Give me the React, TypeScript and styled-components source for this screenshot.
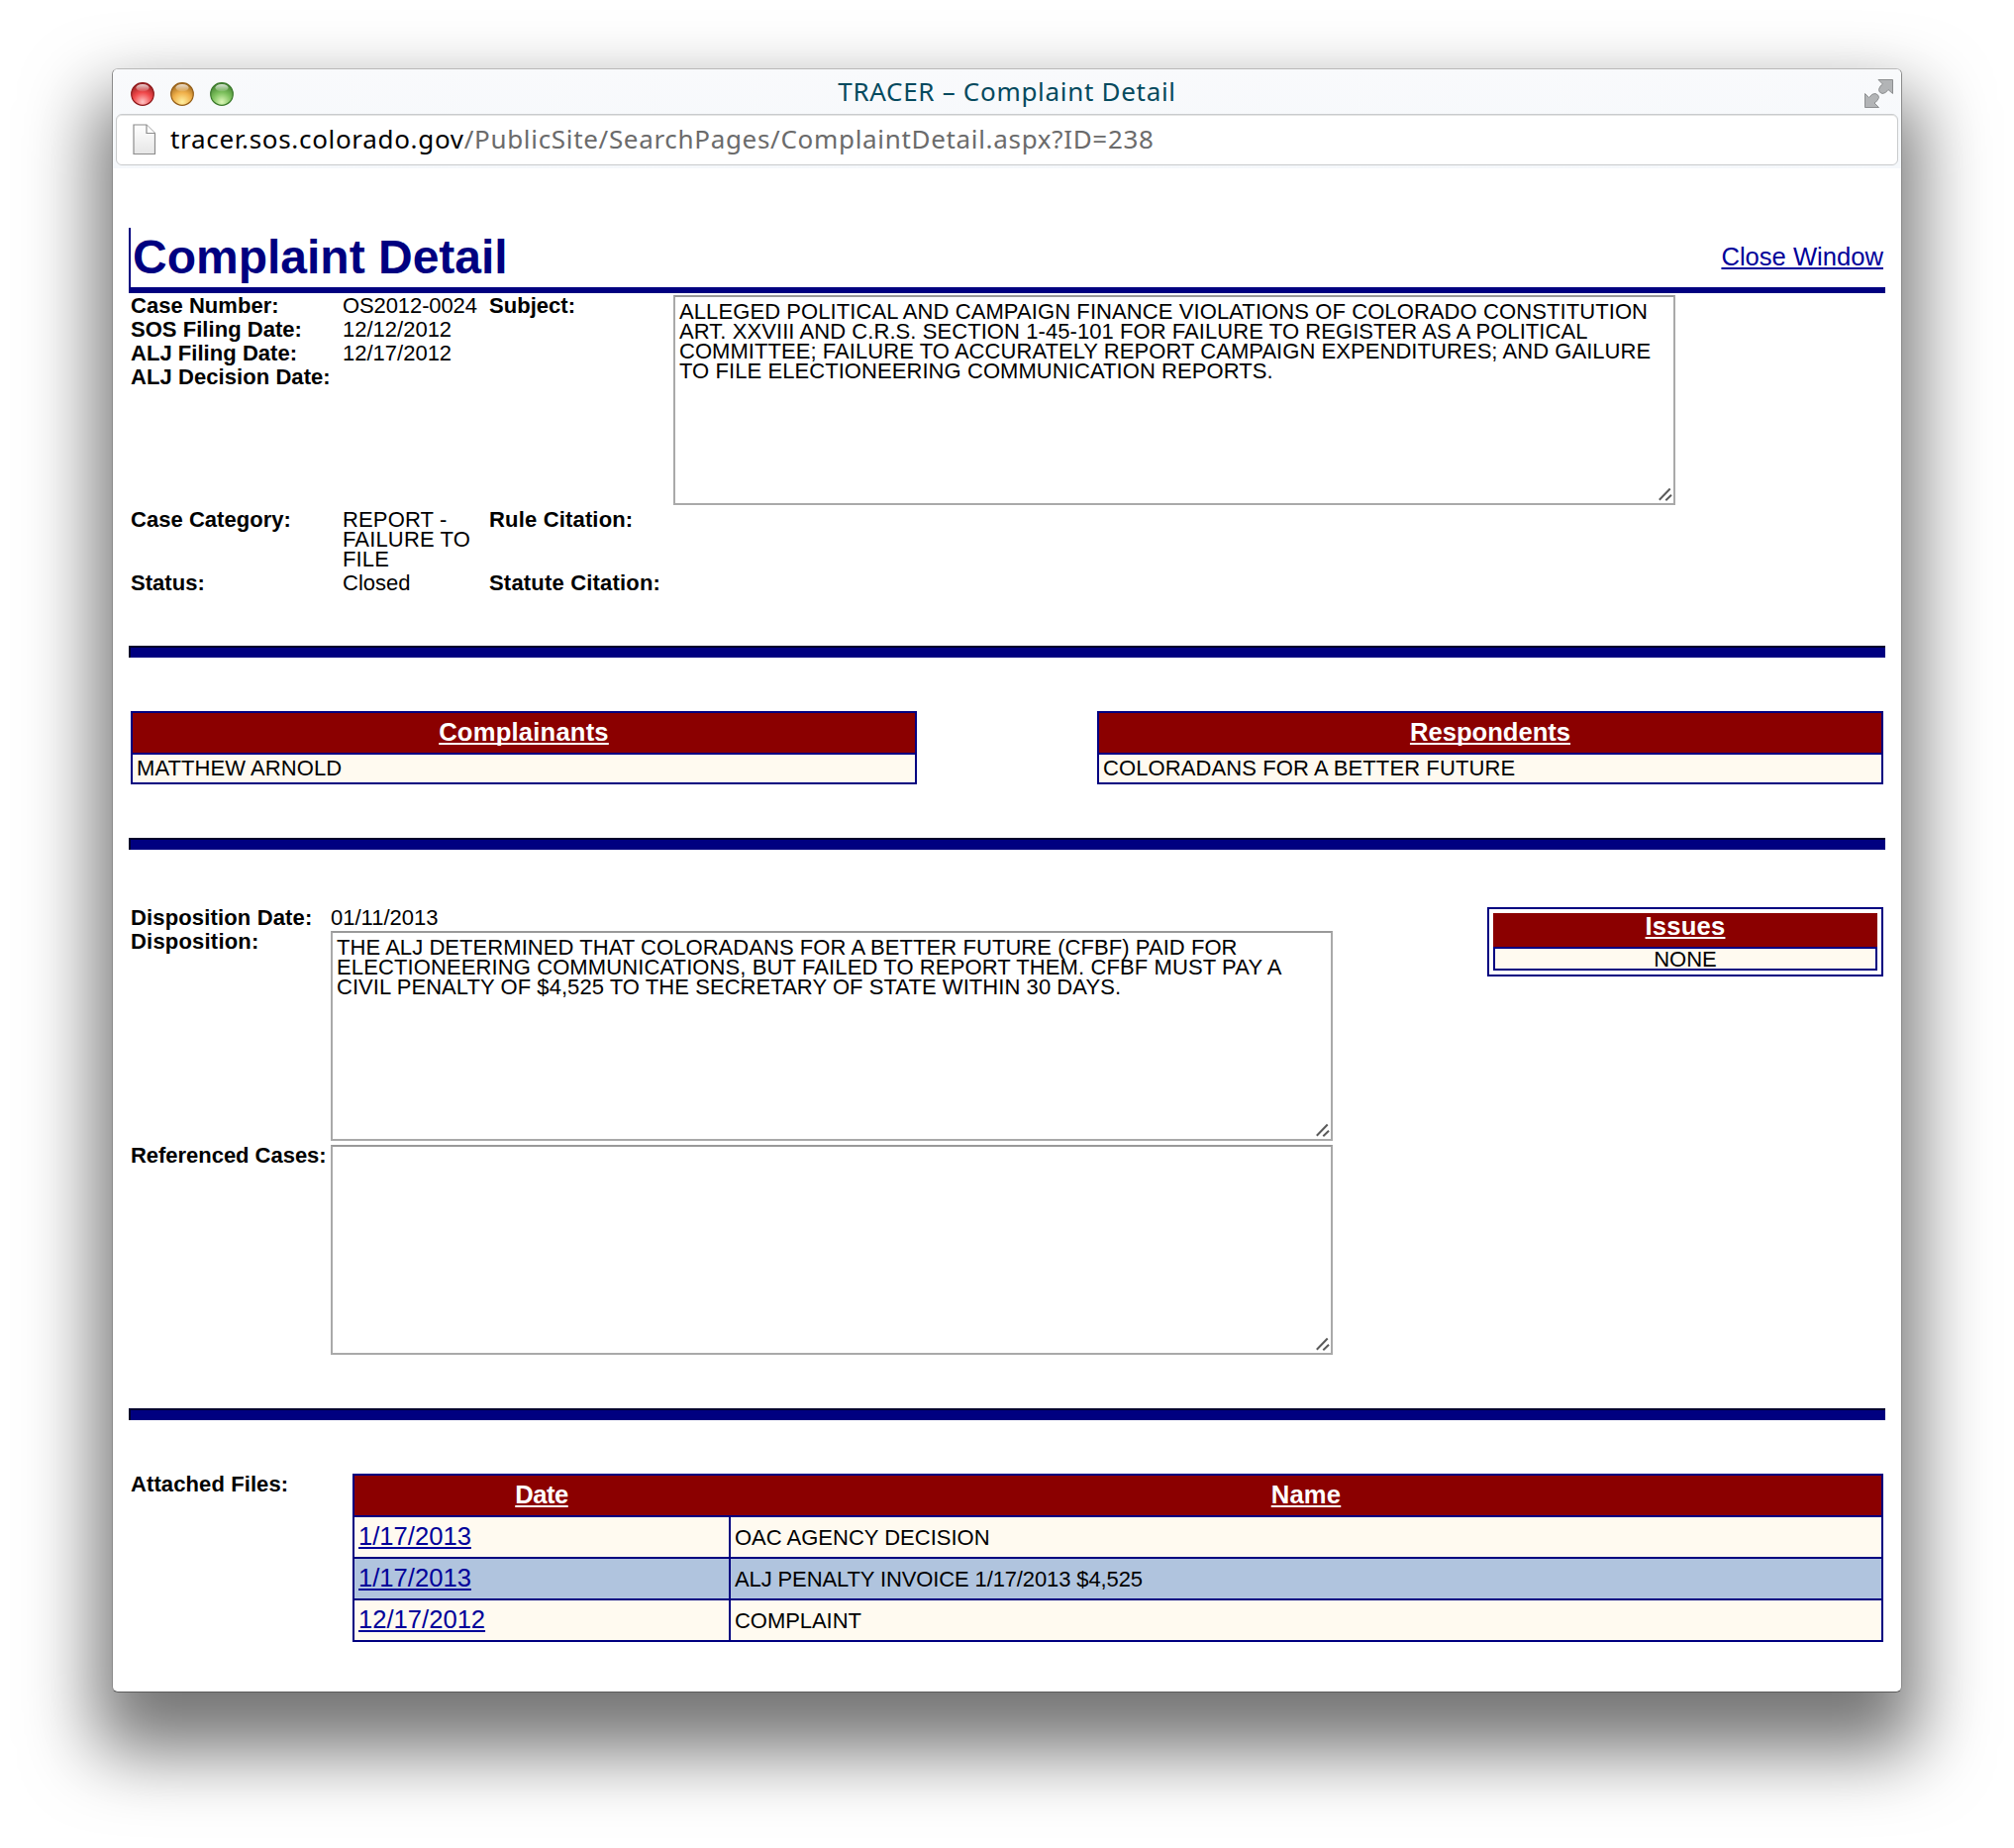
import React from "react";
import styled, { createGlobalStyle } from "styled-components";

const GlobalStyle = createGlobalStyle`
  * { box-sizing: border-box; }
  html, body { margin: 0; background: #fff; }
  body { overflow: hidden; font-family: "Liberation Sans", Arial, sans-serif; color: #000; }
`;

const Desktop = styled.div`
  width: 2034px;
  height: 1866px;
  padding: 69px 0 0 113px;
`;

const Window = styled.div`
  width: 1808px;
  height: 1640px;
  border: 1px solid;
  border-color: #b9b9b9 #8a8a8a #5c5c5c #8a8a8a;
  border-radius: 6px;
  background: #fff;
  overflow: hidden;
  box-shadow: 0 44px 72px 16px rgba(0, 0, 0, 0.54);
`;

const Chrome = styled.div`
  height: 100px;
  padding: 0 3px;
  background: linear-gradient(#f9fafc, #f5f8fb);
`;

const TitleBar = styled.div`
  height: 45px;
  display: grid;
  grid-template-columns: 200px 1fr 200px;
  align-items: center;
`;

const Lights = styled.div`
  display: flex;
  gap: 16px;
  padding: 3px 0 0 15px;
`;

const Title = styled.div`
  text-align: center;
  font: 26px/44px "Noto Sans", "Open Sans", sans-serif;
  letter-spacing: 0.7px;
  color: #054a5e;
  white-space: nowrap;
  padding-bottom: 2px;
`;

const Expand = styled.div`
  justify-self: end;
  padding: 2px 5px 0 0;
  line-height: 0;
`;

const UrlBar = styled.div`
  height: 52px;
  border: 1px solid #c9cbcd;
  border-radius: 6px;
  background: #fff;
  box-shadow: inset 0 1px 0 #e4e4e4;
  display: flex;
  align-items: center;
  padding-left: 16px;
`;

const Url = styled.div`
  margin-left: 14px;
  padding-bottom: 2px;
  font: 26px/48px "Noto Sans", "Open Sans", sans-serif;
  letter-spacing: 0.68px;
  color: #6b6b6b;
  white-space: nowrap;
`;

const Host = styled.span`
  color: #000;
`;

const Page = styled.div`
  padding: 60px 16px 0;
`;

const PageHeader = styled.header`
  height: 66px;
  border-left: 2px solid #000080;
  border-bottom: 6px solid #000080;
  display: flex;
  justify-content: space-between;
  padding: 0 2px 0 2px;
`;

const Heading = styled.h1`
  margin: 0;
  font-size: 48px;
  line-height: 60px;
  color: #000080;
`;

const Link = styled.a`
  color: #000099;
  font-size: 25.6px;
  text-decoration: underline;
  text-decoration-thickness: 2px;
  text-underline-offset: 2px;
  text-decoration-skip-ink: none;
`;

const CloseLink = styled(Link)`
  line-height: 58px;
`;

const CaseGrid = styled.div`
  display: grid;
  grid-template-columns: 214px 148px 186px 1012px;
  grid-template-rows: 216px 64px 24px;
  padding: 2px 0 0 2px;
  font-size: 22px;
  line-height: 20px;
`;

const Stack = styled.div`
  display: flex;
  flex-direction: column;
  gap: 3px;
`;

const Label = styled.div<{ $ls?: number }>`
  padding-top: 1px;
  font-weight: bold;
  font-size: 22px;
  line-height: 20px;
  letter-spacing: ${(p) => p.$ls ?? 0.04}px;
  white-space: nowrap;
`;

const Value = styled.div<{ $ls?: number }>`
  padding-top: 1px;
  font-size: 22px;
  line-height: 20px;
  letter-spacing: ${(p) => p.$ls ?? 0}px;
`;

const Area = styled.div`
  width: 1012px;
  height: 212px;
  border: 2px solid #a9a9a9;
  border-top-color: #999;
  padding: 5px 4px 4px;
  display: flex;
  flex-direction: column;
`;

const Line = styled.div<{ $ls: number }>`
  font-size: 22px;
  line-height: 20px;
  letter-spacing: ${(p) => p.$ls}px;
  white-space: nowrap;
`;

const GripIcon = styled.svg`
  align-self: flex-end;
  flex: none;
  margin: auto -4px -4px 0;
`;

const Rule = styled.div<{ $top?: number }>`
  height: 12px;
  margin-top: ${(p) => p.$top ?? 0}px;
  background: #000080;
  border-top: 2px solid #00002c;
  border-left: 2px solid #00002c;
`;

const Parties = styled.div`
  display: flex;
  justify-content: space-between;
  padding: 54px 2px;
`;

const Grid = styled.div<{ $width: number; $cols?: string }>`
  width: ${(p) => p.$width}px;
  display: grid;
  grid-template-columns: ${(p) => p.$cols ?? "1fr"};
  gap: 2px;
  padding: 2px;
  background: #000080;
`;

const HeadRow = styled.div<{ $cols: string }>`
  grid-column: 1 / -1;
  display: grid;
  grid-template-columns: ${(p) => p.$cols};
  gap: 2px;
  background: #8b0000;
`;

const HeadCell = styled.div<{ $h?: number; $lh?: number; $ls?: number }>`
  height: ${(p) => p.$h ?? 40}px;
  line-height: ${(p) => p.$lh ?? 38}px;
  background: #8b0000;
  color: #fff;
  font-size: 25.6px;
  font-weight: bold;
  letter-spacing: ${(p) => p.$ls ?? 0.2}px;
  text-align: center;
  text-decoration: underline;
  text-decoration-thickness: 2px;
  text-underline-offset: 2px;
  text-decoration-skip-ink: none;
`;

const Cell = styled.div<{ $h: number; $lh: number; $alt?: boolean; $center?: boolean; $pad?: number; $ls?: number }>`
  height: ${(p) => p.$h}px;
  line-height: ${(p) => p.$lh}px;
  background: ${(p) => (p.$alt ? "#b0c4de" : "#fffaf0")};
  text-align: ${(p) => (p.$center ? "center" : "left")};
  padding-left: ${(p) => p.$pad ?? 0}px;
  letter-spacing: ${(p) => p.$ls ?? 0}px;
  font-size: 22px;
`;

const Disposition = styled.div`
  display: flex;
  justify-content: space-between;
  align-items: flex-start;
  padding: 58px 2px 54px;
`;

const DispGrid = styled.div`
  display: grid;
  grid-template-columns: 202px 1012px;
  grid-template-rows: 24px 216px 212px;
`;

const IssuesFrame = styled.div`
  width: 400px;
  height: 70px;
  border: 2px solid #000080;
  padding: 4px;
`;

const IssuesBody = styled.div`
  border: 2px solid #000080;
`;

const Files = styled.div`
  display: flex;
  justify-content: space-between;
  padding: 54px 2px 0;
`;

const Ball = ({ id, dark, mid, light }: { id: string; dark: string; mid: string; light: string }) => (
  <svg width="24" height="24" viewBox="0 0 24 24">
    <defs>
      <radialGradient id={id} cx="0.5" cy="0.85" r="0.85">
        <stop offset="0" stopColor={light} />
        <stop offset="0.5" stopColor={mid} />
        <stop offset="1" stopColor={dark} />
      </radialGradient>
      <linearGradient id={id + "h"} x1="0" y1="0" x2="0" y2="1">
        <stop offset="0" stopColor="#fff" stopOpacity="0.8" />
        <stop offset="1" stopColor="#fff" stopOpacity="0.1" />
      </linearGradient>
    </defs>
    <circle cx="12" cy="12" r="11.3" fill={`url(#${id})`} stroke={dark} strokeWidth="1.2" />
    <ellipse cx="12" cy="5.6" rx="6.6" ry="3.6" fill={`url(#${id}h)`} />
  </svg>
);

const Grip = () => (
  <GripIcon width="18" height="18" viewBox="0 0 18 18" stroke="#5a5a5a" strokeWidth="2">
    <path d="M3.8 14.800L14.700 3.500M10.300 15.300L16 9.800" />
  </GripIcon>
);

const files = [
  { date: "1/17/2013", name: "OAC AGENCY DECISION", ls: 0 },
  { date: "1/17/2013", name: "ALJ PENALTY INVOICE 1/17/2013 $4,525", ls: -0.12 },
  { date: "12/17/2012", name: "COMPLAINT", ls: -0.05 },
];

const subject: [string, number][] = [
  ["ALLEGED POLITICAL AND CAMPAIGN FINANCE VIOLATIONS OF COLORADO CONSTITUTION", 0.09],
  ["ART. XXVIII AND C.R.S. SECTION 1-45-101 FOR FAILURE TO REGISTER AS A POLITICAL", 0.07],
  ["COMMITTEE; FAILURE TO ACCURATELY REPORT CAMPAIGN EXPENDITURES; AND GAILURE", 0.055],
  ["TO FILE ELECTIONEERING COMMUNICATION REPORTS.", 0.07],
];

const disposition: [string, number][] = [
  ["THE ALJ DETERMINED THAT COLORADANS FOR A BETTER FUTURE (CFBF) PAID FOR", 0.06],
  ["ELECTIONEERING COMMUNICATIONS, BUT FAILED TO REPORT THEM. CFBF MUST PAY A", 0.11],
  ["CIVIL PENALTY OF $4,525 TO THE SECRETARY OF STATE WITHIN 30 DAYS.", 0.06],
];

const TextBox = ({ lines = [] }: { lines?: [string, number][] }) => (
  <Area>
    {lines.map(([text, ls]) => (
      <Line key={text} $ls={ls}>{text}</Line>
    ))}
    <Grip />
  </Area>
);

export default function App() {
  return (
    <Desktop>
      <GlobalStyle />
      <Window>
        <Chrome>
          <TitleBar>
            <Lights>
              <Ball id="red" dark="#8e1a1c" mid="#f0484a" light="#ffc4c4" />
              <Ball id="amber" dark="#96601a" mid="#f0b04a" light="#fff0a0" />
              <Ball id="green" dark="#3c7a2c" mid="#7cc05c" light="#dcf8b8" />
            </Lights>
            <Title>TRACER – Complaint Detail</Title>
            <Expand>
              <svg width="29" height="29" viewBox="0 0 29 29" fill="#b2b4b6" stroke="#8d8f91" strokeWidth="1">
                <path d="M14 .5H28.500V14.500L24 10.500Q21.500 14.500 18 14.500Q14.500 13.500 14.500 10.500Q15 7 18.500 5Z" />
                <path d="M14.500 28.500H.5V14.500L4.500 18.500Q8 14 11 14.500Q14.500 15.500 14.500 18.500Q13.500 22 10 24Z" />
              </svg>
            </Expand>
          </TitleBar>
          <UrlBar>
            <svg width="24" height="32" viewBox="0 0 24 32">
              <defs>
                <linearGradient id="sheet" x1="0" y1="0" x2="0" y2="1">
                  <stop offset="0" stopColor="#fff" />
                  <stop offset="1" stopColor="#e6e6e6" />
                </linearGradient>
              </defs>
              <path d="M1 1H14L22.500 9.500V30.500H1Z" fill="url(#sheet)" stroke="#8c8c8c" strokeWidth="1.200" />
              <path d="M14 1V9.500H22.500" fill="#fff" stroke="#8c8c8c" strokeWidth="1.200" />
            </svg>
            <Url>
              <Host>tracer.sos.colorado.gov</Host>/PublicSite/SearchPages/ComplaintDetail.aspx?ID=238
            </Url>
          </UrlBar>
        </Chrome>
        <Page>
          <PageHeader>
            <Heading>Complaint Detail</Heading>
            <CloseLink>Close Window</CloseLink>
          </PageHeader>
          <CaseGrid>
            <Stack>
              <Label>Case Number:</Label>
              <Label>SOS Filing Date:</Label>
              <Label>ALJ Filing Date:</Label>
              <Label $ls={0.07}>ALJ Decision Date:</Label>
            </Stack>
            <Stack>
              <Value $ls={-0.1}>OS2012-0024</Value>
              <Value>12/12/2012</Value>
              <Value>12/17/2012</Value>
            </Stack>
            <Label>Subject:</Label>
            <TextBox lines={subject} />
            <Label>Case Category:</Label>
            <Value $ls={0.15}>REPORT - FAILURE TO FILE</Value>
            <Label $ls={0.17}>Rule Citation:</Label>
            <div />
            <Label>Status:</Label>
            <Value>Closed</Value>
            <Label $ls={0.19}>Statute Citation:</Label>
          </CaseGrid>
          <Rule $top={50} />
          <Parties>
            <Grid $width={794}>
              <HeadCell>Complainants</HeadCell>
              <Cell $h={28} $lh={28} $pad={4} $ls={0.08}>MATTHEW ARNOLD</Cell>
            </Grid>
            <Grid $width={794}>
              <HeadCell $ls={0}>Respondents</HeadCell>
              <Cell $h={28} $lh={28} $pad={4} $ls={0.1}>COLORADANS FOR A BETTER FUTURE</Cell>
            </Grid>
          </Parties>
          <Rule />
          <Disposition>
            <DispGrid>
              <Label $ls={0.15}>Disposition Date:</Label>
              <Value>01/11/2013</Value>
              <Label $ls={0.2}>Disposition:</Label>
              <TextBox lines={disposition} />
              <Label $ls={-0.03}>Referenced Cases:</Label>
              <TextBox />
            </DispGrid>
            <IssuesFrame>
              <HeadCell $h={34} $lh={26}>Issues</HeadCell>
              <IssuesBody>
                <Cell $h={20} $lh={22} $center>NONE</Cell>
              </IssuesBody>
            </IssuesFrame>
          </Disposition>
          <Rule />
          <Files>
            <Label $ls={0.1}>Attached Files:</Label>
            <Grid $width={1546} $cols="378px 1fr">
              <HeadRow $cols="378px 1fr">
                <HeadCell $ls={-0.5}>Date</HeadCell>
                <HeadCell>Name</HeadCell>
              </HeadRow>
              {files.map((f, i) => (
                <React.Fragment key={i}>
                  <Cell $h={40} $lh={38} $alt={i % 2 === 1} $pad={4}>
                    <Link>{f.date}</Link>
                  </Cell>
                  <Cell $h={40} $lh={42} $alt={i % 2 === 1} $pad={4} $ls={f.ls}>{f.name}</Cell>
                </React.Fragment>
              ))}
            </Grid>
          </Files>
        </Page>
      </Window>
    </Desktop>
  );
}
